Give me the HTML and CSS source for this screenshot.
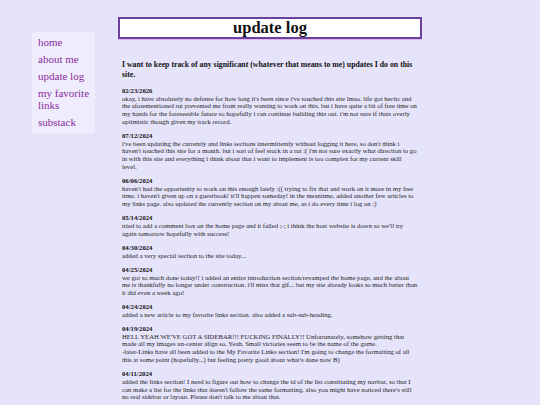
FILE: index.html
```html
<!DOCTYPE html>
<html>
<head>
<meta charset="utf-8">
<title>update log</title>
<link rel="stylesheet" href="styles.css">
</head>
<body>
<div class="page">
  <nav class="sidebar">
    <a href="#">home</a>
    <a href="#">about me</a>
    <a href="#">update log</a>
    <a href="#">my favorite links</a>
    <a href="#">substack</a>
  </nav>
  <main class="main">
    <h1 class="title">update log</h1>
    <p class="intro">I want to keep track of any significant (whatever that means to me) updates I do on this site.</p>
    <p class="entry"><b>02/23/2026</b><br>okay, i have absolutely no defense for how long it's been since i've touched this site lmao. life got hectic and the aforementioned rut prevented me from really wanting to work on this, but i have quite a bit of free time on my hands for the foreseeable future so hopefully i can continue building this out. i'm not sure if thats overly optimistic though given my track record.</p>
    <p class="entry"><b>07/12/2024</b><br>i've been updating the currently and links sections intermittently without logging it here, so don't think i haven't touched this site for a month. but i sort of feel stuck in a rut :( i'm not sure exactly what direction to go in with this site and everything i think about that i want to implement is too complex for my current skill level.</p>
    <p class="entry"><b>06/06/2024</b><br>haven't had the opportunity to work on this enough lately :(( trying to fix that and work on it more in my free time. i haven't given up on a guestbook! it'll happen someday! in the meantime, added another few articles to my links page. also updated the currently section on my about me, as i do every time i log on :)</p>
    <p class="entry"><b>05/14/2024</b><br>tried to add a comment box on the home page and it failed ;-; i think the host website is down so we'll try again tomorrow hopefully with success!</p>
    <p class="entry"><b>04/30/2024</b><br>added a very special section to the site today...</p>
    <p class="entry"><b>04/25/2024</b><br>we got so much done today!! i added an entire introduction section/revamped the home page, and the about me is thankfully no longer under construction. i'll miss that gif... but my site already looks so much better than it did even a week ago!</p>
    <p class="entry"><b>04/24/2024</b><br>added a new article to my favorite links section. also added a sub-sub-heading.</p>
    <p class="entry"><b>04/19/2024</b><br>HELL YEAH WE'VE GOT A SIDEBAR!!! FUCKING FINALLY!! Unfortunately, somehow getting that made all my images un-center align so. Yeah. Small victories seem to be the name of the game.<br>-later-Links have all been added to the My Favorite Links section! I'm going to change the formatting of all this at some point (hopefully...) but feeling pretty good about what's done now B)</p>
    <p class="entry"><b>04/11/2024</b><br>added the links section! I need to figure out how to change the id of the list constituting my navbar, so that I can make a list for the links that doesn't follow the same formatting. also you might have noticed there's still no real sidebar or layout. Please don't talk to me about that.</p>
  </main>
</div>
</body>
</html>
```
FILE: styles.css
```css
html, body {
  margin: 0;
  padding: 0;
  background: #e6e4fa;
}
body {
  font-family: "Liberation Serif", "Times New Roman", serif;
  color: #1e1e1e;
}
.page {
  display: flex;
  align-items: flex-start;
  padding: 17px 0 0 32px;
}
.sidebar {
  margin-top: 15px;
  width: 51px;
  padding: 4px 6px 5px 6px;
  background: #efecfd;
  display: flex;
  flex-direction: column;
  gap: 5px;
}
.sidebar a {
  color: #8a2c9c;
  text-decoration: none;
  font-size: 11px;
  line-height: 12px;
}
.main {
  margin-left: 23px;
  width: 304px;
}
.title {
  margin: 0;
  height: 18px;
  background: #fff;
  border: 2px solid #6d3f9e;
  box-shadow: 0 1px 0 #d9b6ee;
  font-size: 16.5px;
  line-height: 18px;
  text-align: center;
  font-weight: bold;
  color: #111;
}
.intro {
  margin: 21px 4px 7px 4px;
  font-size: 7.8px;
  line-height: 10px;
  font-weight: bold;
  color: #111;
}
.entry {
  margin: 0 4px 6.5px 4px;
  font-size: 6.7px;
  line-height: 7.7px;
}
.entry b {
  color: #111;
}
```
